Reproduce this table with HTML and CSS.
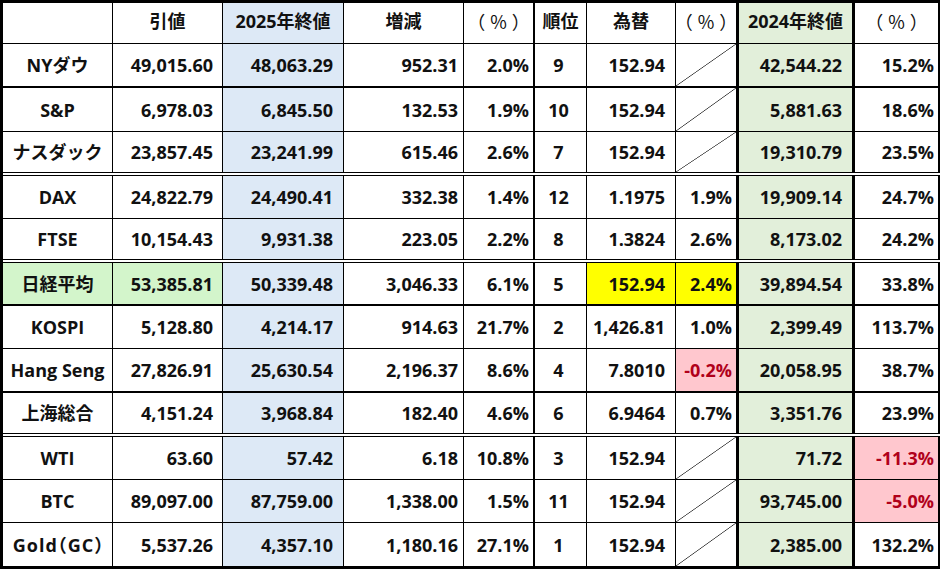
FILE: index.html
```
<!DOCTYPE html>
<html lang="ja">
<head>
<meta charset="utf-8">
<title>市場比較表</title>
<link rel="stylesheet" href="styles.css">
</head>
<body>
<div class="sheet">
  <div class="row head b1">
    <div class="c n"></div>
    <div class="c h">引値</div>
    <div class="c h blue">2025年終値</div>
    <div class="c h">増減</div>
    <div class="c h pct">（%）</div>
    <div class="c h rk">順位</div>
    <div class="c h">為替</div>
    <div class="c h fx pct">（%）</div>
    <div class="c h green">2024年終値</div>
    <div class="c h last pct">（%）</div>
  </div>
  <div class="row b2">
    <div class="c n">NYダウ</div>
    <div class="c v2">49,015.60</div>
    <div class="c v3 blue">48,063.29</div>
    <div class="c v4">952.31</div>
    <div class="c p5">2.0%</div>
    <div class="c rk">9</div>
    <div class="c v7">152.94</div>
    <div class="c fx diag"></div>
    <div class="c v9 green">42,544.22</div>
    <div class="c last">15.2%</div>
  </div>
  <div class="row b1">
    <div class="c n">S&amp;P</div>
    <div class="c v2">6,978.03</div>
    <div class="c v3 blue">6,845.50</div>
    <div class="c v4">132.53</div>
    <div class="c p5">1.9%</div>
    <div class="c rk">10</div>
    <div class="c v7">152.94</div>
    <div class="c fx diag"></div>
    <div class="c v9 green">5,881.63</div>
    <div class="c last">18.6%</div>
  </div>
  <div class="row bd">
    <div class="c n">ナスダック</div>
    <div class="c v2">23,857.45</div>
    <div class="c v3 blue">23,241.99</div>
    <div class="c v4">615.46</div>
    <div class="c p5">2.6%</div>
    <div class="c rk">7</div>
    <div class="c v7">152.94</div>
    <div class="c fx diag"></div>
    <div class="c v9 green">19,310.79</div>
    <div class="c last">23.5%</div>
  </div>
  <div class="row b1 short">
    <div class="c n">DAX</div>
    <div class="c v2">24,822.79</div>
    <div class="c v3 blue">24,490.41</div>
    <div class="c v4">332.38</div>
    <div class="c p5">1.4%</div>
    <div class="c rk">12</div>
    <div class="c v7">1.1975</div>
    <div class="c fx">1.9%</div>
    <div class="c v9 green">19,909.14</div>
    <div class="c last">24.7%</div>
  </div>
  <div class="row bd">
    <div class="c n">FTSE</div>
    <div class="c v2">10,154.43</div>
    <div class="c v3 blue">9,931.38</div>
    <div class="c v4">223.05</div>
    <div class="c p5">2.2%</div>
    <div class="c rk">8</div>
    <div class="c v7">1.3824</div>
    <div class="c fx">2.6%</div>
    <div class="c v9 green">8,173.02</div>
    <div class="c last">24.2%</div>
  </div>
  <div class="row b2 short">
    <div class="c n mint">日経平均</div>
    <div class="c v2 mint">53,385.81</div>
    <div class="c v3 blue">50,339.48</div>
    <div class="c v4">3,046.33</div>
    <div class="c p5">6.1%</div>
    <div class="c rk">5</div>
    <div class="c v7 yellow">152.94</div>
    <div class="c fx yellow">2.4%</div>
    <div class="c v9 green">39,894.54</div>
    <div class="c last">33.8%</div>
  </div>
  <div class="row b1 short">
    <div class="c n">KOSPI</div>
    <div class="c v2">5,128.80</div>
    <div class="c v3 blue">4,214.17</div>
    <div class="c v4">914.63</div>
    <div class="c p5">21.7%</div>
    <div class="c rk">2</div>
    <div class="c v7">1,426.81</div>
    <div class="c fx">1.0%</div>
    <div class="c v9 green">2,399.49</div>
    <div class="c last">113.7%</div>
  </div>
  <div class="row b2">
    <div class="c n">Hang Seng</div>
    <div class="c v2">27,826.91</div>
    <div class="c v3 blue">25,630.54</div>
    <div class="c v4">2,196.37</div>
    <div class="c p5">8.6%</div>
    <div class="c rk">4</div>
    <div class="c v7">7.8010</div>
    <div class="c fx bad">-0.2%</div>
    <div class="c v9 green">20,058.95</div>
    <div class="c last">38.7%</div>
  </div>
  <div class="row bd">
    <div class="c n">上海総合</div>
    <div class="c v2">4,151.24</div>
    <div class="c v3 blue">3,968.84</div>
    <div class="c v4">182.40</div>
    <div class="c p5">4.6%</div>
    <div class="c rk">6</div>
    <div class="c v7">6.9464</div>
    <div class="c fx">0.7%</div>
    <div class="c v9 green">3,351.76</div>
    <div class="c last">23.9%</div>
  </div>
  <div class="row b1 short">
    <div class="c n">WTI</div>
    <div class="c v2">63.60</div>
    <div class="c v3 blue">57.42</div>
    <div class="c v4">6.18</div>
    <div class="c p5">10.8%</div>
    <div class="c rk">3</div>
    <div class="c v7">152.94</div>
    <div class="c fx diag"></div>
    <div class="c v9 green">71.72</div>
    <div class="c last bad">-11.3%</div>
  </div>
  <div class="row b1 short">
    <div class="c n">BTC</div>
    <div class="c v2">89,097.00</div>
    <div class="c v3 blue">87,759.00</div>
    <div class="c v4">1,338.00</div>
    <div class="c p5">1.5%</div>
    <div class="c rk">11</div>
    <div class="c v7">152.94</div>
    <div class="c fx diag"></div>
    <div class="c v9 green">93,745.00</div>
    <div class="c last bad">-5.0%</div>
  </div>
  <div class="row end short">
    <div class="c n gold">Gold（GC）</div>
    <div class="c v2">5,537.26</div>
    <div class="c v3 blue">4,357.10</div>
    <div class="c v4">1,180.16</div>
    <div class="c p5">27.1%</div>
    <div class="c rk">1</div>
    <div class="c v7">152.94</div>
    <div class="c fx diag"></div>
    <div class="c v9 green">2,385.00</div>
    <div class="c last">132.2%</div>
  </div>
</div>
</body>
</html>
```
FILE: styles.css
```
html, body {
  margin: 0;
  padding: 0;
  background: #fff;
}

.sheet {
  width: 940px;
  box-sizing: border-box;
  border-top: 3px solid #000;
  border-left: 3px solid #000;
  border-bottom: 3px solid #000;
  display: flex;
  flex-direction: column;
  font-family: "Open Sans", "Noto Sans CJK JP", sans-serif;
  font-weight: 700;
  font-size: 18px;
  color: #111;
}

.row {
  display: grid;
  grid-template-columns: 110px 110px 121px 120px 71px 52px 89px 63px 116px 85px;
  height: 44px;
  box-sizing: border-box;
}

.row.head { height: 41px; }
.row.short { height: 43px; }

.row.b1 { border-bottom: 1px solid #000; }
.row.b2 { border-bottom: 2px solid #000; }
.row.bd { border-bottom: 4px double #000; }
.row.end { border-bottom: 0; }

.c {
  box-sizing: border-box;
  border-right: 1px solid #000;
  display: flex;
  align-items: center;
  justify-content: flex-end;
  white-space: nowrap;
  line-height: 1;
}

.c.n { justify-content: center; }
.c.h { justify-content: center; padding-bottom: 4px; }
.c.h.pct {
  font-family: "Noto Sans CJK JP", sans-serif;
  font-weight: 400;
  letter-spacing: 5px;
  padding-left: 5px;
}

.c.gold {
  font-feature-settings: "halt";
  letter-spacing: 1px;
  padding-left: 2px;
}

.v2 { padding-right: 9px; }
.v3 { padding-right: 10px; }
.v4 { padding-right: 5px; }
.p5 { padding-right: 4px; }
.c.h.p5 { padding-right: 0; }
.rk { justify-content: center; padding-right: 4px; }
.c.h.rk { padding-right: 0; }
.v7 { padding-right: 10px; }
.fx { padding-right: 4px; }
.c.h.fx { padding-right: 0; }
.v9 { padding-right: 10px; }
.last { padding-right: 4px; }
.c.h.last { padding-right: 0; }

.row .c:nth-child(5) { border-right-width: 2px; }
.row .c:nth-child(8) { border-right-width: 3px; }
.row .c:nth-child(9) { border-right-width: 3px; }
.row .c:nth-child(10) { border-right-width: 2px; }

.blue { background: #dde9f6; }
.green { background: #e2efda; }
.mint { background: #d3f5cb; }
.yellow { background: #ffff00; }
.bad { background: #ffc7ce; color: #b0001a; }

.diag {
  background: linear-gradient(to bottom right,
    transparent calc(50% - 0.7px),
    #333 50%,
    transparent calc(50% + 0.7px));
}
```
